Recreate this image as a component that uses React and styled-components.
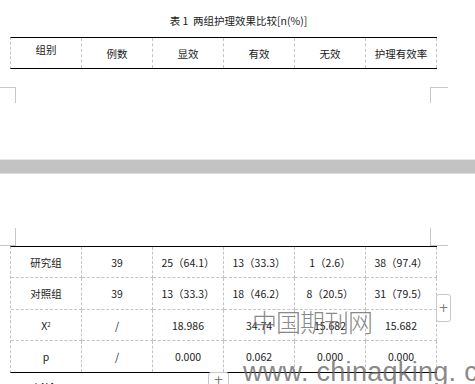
import React from "react";
import styled, { createGlobalStyle } from "styled-components";

const GlobalStyle = createGlobalStyle`
  html, body {
    margin: 0;
    padding: 0;
    background: #ffffff;
  }
  body {
    font-family: "Noto Sans CJK SC", "Noto Sans", sans-serif;
    color: #1b1b1b;
  }
`;

const Page = styled("div")`
  position: relative;
  width: 475px;
  height: 384px;
  overflow: hidden;
  background: #ffffff;
`;

const Sheet = styled("section")`
  height: ${(p) => p.$height}px;
  display: flex;
  flex-direction: column;
  & > * {
    flex-shrink: 0;
  }
`;

const Title = styled("h3")`
  margin: 13px 0 0;
  height: 16px;
  line-height: 16px;
  font-size: 10.5px;
  font-weight: normal;
  text-align: center;
  padding-left: 2px;
  white-space: pre;
`;

const Table = styled("div")`
  margin: ${(p) => p.$top}px 0 0 10px;
  width: 426px;
  display: grid;
  grid-template-columns: repeat(6, 71px);
  border-top: 1px solid #000;
  border-bottom: 1px solid #000;
  border-left: 1px dashed #c4c4c4;
`;

const Cell = styled("div")`
  box-sizing: border-box;
  height: ${(p) => p.$h || 31}px;
  display: flex;
  align-items: center;
  justify-content: center;
  padding-bottom: ${(p) => p.$raise || 0}px;
  font-size: 10.5px;
  border-right: 1px dashed #c4c4c4;
  border-bottom: ${(p) => (p.$last ? "none" : "1px dashed #c4c4c4")};
  white-space: nowrap;
`;

const Sup = styled("sup")`
  font-size: 6px;
  position: relative;
  top: -1px;
`;

const CornerRow = styled("div")`
  width: 448px;
  display: flex;
  margin-top: ${(p) => p.$top}px;
  height: ${(p) => p.$h}px;
`;

const Corner = styled("div")`
  box-sizing: border-box;
  width: ${(p) => (p.$side === "left" ? 16 : 18)}px;
  height: 100%;
  margin-left: ${(p) => (p.$side === "left" ? 0 : "auto")};
  border-color: #c8c8c8;
  border-style: solid;
  border-width: 0;
  ${(p) => (p.$side === "left" ? "border-right-width: 1px;" : "border-left-width: 1px;")}
  ${(p) => (p.$edge === "top" ? "border-top-width: 1px;" : "border-bottom-width: 1px;")}
`;

const Band = styled("div")`
  height: 13px;
  background: #c3c3c3;
  border-top: 1px solid #e8e8e8;
  border-bottom: 1px solid #dedede;
`;

const Heading = styled("h4")`
  margin: 8px 0 0 25px;
  font-size: 11px;
  font-weight: bold;
  line-height: 14px;
`;

const AddButton = styled("div")`
  position: absolute;
  left: ${(p) => p.$x}px;
  top: ${(p) => p.$y}px;
  width: ${(p) => p.$w}px;
  height: ${(p) => p.$h}px;
  box-sizing: border-box;
  border: 1px solid #c8c8c8;
  border-radius: 3px;
  background: #ffffff;
  color: #777;
  font-family: "DejaVu Sans", sans-serif;
  font-size: 12px;
  display: flex;
  align-items: ${(p) => p.$align || "center"};
  justify-content: center;
`;

const Watermark = styled("div")`
  position: absolute;
  left: ${(p) => p.$x}px;
  top: ${(p) => p.$y}px;
  color: rgba(105, 105, 105, 0.8);
  font-size: ${(p) => p.$size}px;
  letter-spacing: ${(p) => p.$spacing}px;
  font-family: ${(p) =>
    p.$latin ? '"Liberation Sans", sans-serif' : '"Noto Sans CJK SC", sans-serif'};
  font-weight: ${(p) => (p.$latin ? "normal" : 300)};
  line-height: 1;
  white-space: nowrap;
  pointer-events: none;
`;

const header = ["组别", "例数", "显效", "有效", "无效", "护理有效率"];

const rows = [
  ["研究组", "39", "25（64.1）", "13（33.3）", "1（2.6）", "38（97.4）"],
  ["对照组", "39", "13（33.3）", "18（46.2）", "8（20.5）", "31（79.5）"],
  ["X2", "/", "18.986", "34.74", "15.682", "15.682"],
  ["p", "/", "0.000", "0.062", "0.000", "0.000"],
];

const rowHeights = [31, 32, 31, 31];

const App = () => (
  <Page>
    <GlobalStyle />
    <Sheet $height={159}>
      <Title>{"表 1  两组护理效果比较[n(%)]"}</Title>
      <Table $top={8}>
        {header.map((h, i) => (
          <Cell key={h} $h={30} $last $raise={i === 0 ? 8 : 0}>
            {h}
          </Cell>
        ))}
      </Table>
      <CornerRow $top={18} $h={16}>
        <Corner $side="left" $edge="top" />
        <Corner $side="right" $edge="top" />
      </CornerRow>
    </Sheet>
    <Band />
    <Sheet $height={210}>
      <CornerRow $top={54} $h={18}>
        <Corner $side="left" $edge="bottom" />
        <Corner $side="right" $edge="bottom" />
      </CornerRow>
      <Table $top={0}>
        {rows.map((row, r) =>
          row.map((value, c) => (
            <Cell key={`${r}-${c}`} $h={rowHeights[r]} $last={r === rows.length - 1}>
              {value === "X2" ? (
                <>
                  X<Sup>2</Sup>
                </>
              ) : (
                value
              )}
            </Cell>
          ))
        )}
      </Table>
      <Heading>2 讨论</Heading>
    </Sheet>
    <AddButton $x={436} $y={294} $w={15} $h={28}>+</AddButton>
    <AddButton $x={208} $y={372} $w={21} $h={20} $align="flex-start">+</AddButton>
    <Watermark $x={252} $y={309} $size={25} $spacing={-1}>
      中国期刊网
    </Watermark>
    <Watermark $x={243} $y={359} $size={27} $spacing={0.3} $latin>
      www. chinaqking. com
    </Watermark>
  </Page>
);

export default App;
